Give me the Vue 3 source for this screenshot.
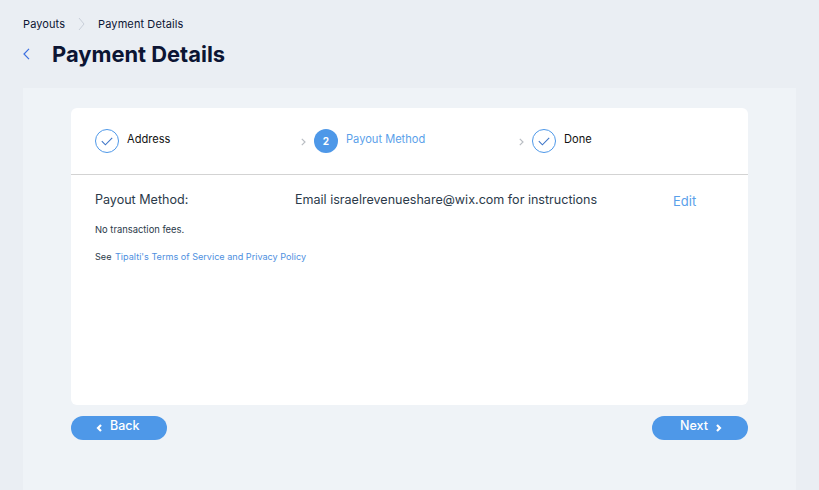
<script setup>
const steps = [
  { label: 'Address', state: 'done' },
  { label: 'Payout Method', state: 'active', num: 2 },
  { label: 'Done', state: 'done' },
]
</script>

<template>
  <div class="page">
    <nav class="crumbs">
      <span>Payouts</span>
      <svg class="crumb-sep" width="7" height="14" viewBox="0 0 7 14"><path d="M1 1l5 6-5 6" fill="none" stroke="#c9cfd9" stroke-width="1" /></svg>
      <span>Payment Details</span>
    </nav>
    <header class="head">
      <svg class="head-back" width="7" height="12" viewBox="0 0 7 12"><path d="M6 .8L1 6l5 5.2" fill="none" stroke="#3b6fe0" stroke-width="1.2" /></svg>
      <h1>Payment Details</h1>
    </header>
    <main class="panel">
      <section class="card">
        <div class="steps">
          <div v-for="(s, i) in steps" :key="s.label" class="step" :class="'step-' + i">
            <svg v-if="i > 0" class="step-sep" width="5" height="8" viewBox="0 0 5 8"><path d="M.8.8L4 4 .8 7.2" fill="none" stroke="#b9bdc3" stroke-width="1.2" /></svg>
            <span v-if="s.state === 'active'" class="dot">{{ s.num }}</span>
            <svg v-else class="ring" width="24" height="24" viewBox="0 0 24 24">
              <circle cx="12" cy="12" r="11.5" fill="none" stroke="#4e98e8" />
              <path d="M6.8 12.2l3.6 3.6 6.8-7" fill="none" stroke="#3f76c8" stroke-width="1.1" />
            </svg>
            <span class="step-label" :class="{ current: s.state === 'active' }">{{ s.label }}</span>
          </div>
        </div>
        <div class="details">
          <div class="method-row">
            <span class="method-name">Payout Method:</span>
            <span class="method-value">Email israelrevenueshare@wix.com for instructions</span>
            <a class="edit">Edit</a>
          </div>
          <p class="note">No transaction fees.</p>
          <p class="note terms">See <a>Tipalti's Terms of Service and Privacy Policy</a></p>
        </div>
      </section>
      <div class="actions">
        <button class="btn btn-back">
          <svg width="7" height="8" viewBox="0 0 7 8"><path d="M5 .9L2 4l3 3.1" fill="none" stroke="#fff" stroke-width="2.2" /></svg>
          Back
        </button>
        <button class="btn btn-next">
          Next
          <svg width="7" height="8" viewBox="0 0 7 8"><path d="M2 .9L5 4 2 7.1" fill="none" stroke="#fff" stroke-width="2.2" /></svg>
        </button>
      </div>
    </main>
  </div>
</template>

<style>
html, body {
  margin: 0;
  background: #eaeef3;
}
</style>

<style scoped>
.page {
  width: 819px;
  height: 490px;
  overflow: hidden;
  box-sizing: border-box;
  padding: 16px 23px 0;
  font-family: Inter, "Liberation Sans", sans-serif;
  color: #0c1533;
}
.crumbs {
  display: flex;
  align-items: center;
  height: 15px;
  font-size: 11px;
  letter-spacing: .1px;
  color: #0c1533;
}
.crumb-sep {
  margin: 0 13px 0 13px;
}
.head {
  display: flex;
  align-items: center;
  height: 30px;
  margin-top: 8px;
}
.head-back {
  margin-right: 22px;
  flex: none;
}
h1 {
  margin: 0;
  font-size: 21.9px;
  font-weight: 700;
  color: #0c1533;
}
.panel {
  box-sizing: border-box;
  width: 773px;
  height: 402px;
  margin-top: 19px;
  padding: 20px 48px 0;
  background: #eff3f7;
}
.card {
  height: 297px;
  background: #fff;
  border-radius: 6px;
  overflow: hidden;
}
.steps {
  display: flex;
  box-sizing: border-box;
  height: 67px;
  padding: 21px 0 0 24px;
  border-bottom: 1px solid #d3d3d3;
}
.step {
  display: flex;
  align-items: flex-start;
}
.step-0 {
  width: 206px;
}
.step-1 {
  width: 218px;
}
.step-sep {
  margin: 9px 8px 0 0;
}
.ring {
  flex: none;
}
.dot {
  display: flex;
  flex: none;
  align-items: center;
  justify-content: center;
  width: 24px;
  height: 24px;
  border-radius: 50%;
  background: #4e98e8;
  color: #fff;
  font-size: 10px;
  font-weight: 700;
}
.step-label {
  margin: 3px 0 0 8px;
  font-size: 11.1px;
  line-height: 14px;
  color: #111;
}
.step-label.current {
  color: #5a9fea;
}
.details {
  padding: 16px 24px 0;
}
.method-row {
  display: flex;
  align-items: center;
  height: 16px;
  font-size: 12.55px;
  color: #2b3a4a;
}
.method-name {
  width: 200px;
}
.method-value {
  width: 378px;
  flex: none;
}
.edit {
  color: #5a9fea;
  font-size: 13px;
  position: relative;
  top: 2px;
}
.note {
  margin: 17px 0 0;
  font-size: 9.4px;
  line-height: 12px;
  color: #2b3a4a;
}
.note.terms {
  margin-top: 15px;
  font-size: 9.1px;
}
.terms a {
  margin-left: 1px;
  color: #4e8fe0;
}
.actions {
  display: flex;
  justify-content: space-between;
  margin-top: 11px;
}
.btn {
  display: flex;
  align-items: center;
  gap: 7px;
  box-sizing: border-box;
  width: 96px;
  height: 24px;
  padding: 0 0 6px 25px;
  border: 0;
  border-radius: 12px;
  background: #4e98e8;
  color: #fff;
  font-family: inherit;
  font-size: 12.5px;
  font-weight: 500;
}
.btn-next {
  padding-left: 28px;
}
.btn svg {
  position: relative;
  top: 3px;
}
</style>
